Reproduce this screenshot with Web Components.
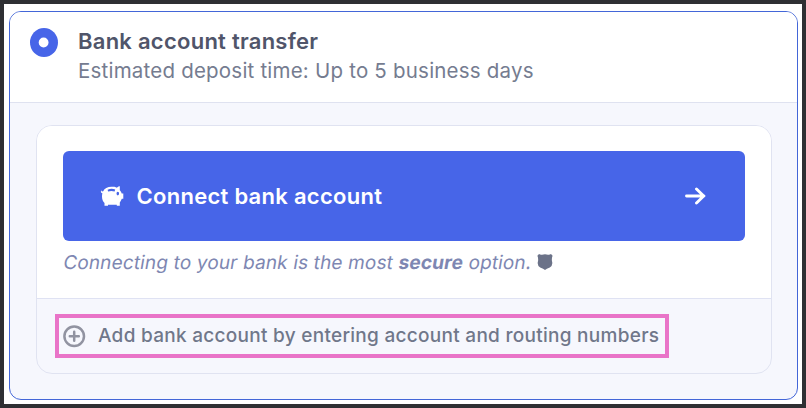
<!DOCTYPE html>
<html lang="en">
<head>
<meta charset="utf-8">
<title>Bank account transfer</title>
<style>
body { margin: 0; font-family: Inter, "Liberation Sans", sans-serif; }
</style>
</head>
<body>
<page-frame>
  <payment-option>
    <option-radio slot="radio"></option-radio>
    <span slot="title">Bank account transfer</span>
    <span slot="detail">Estimated deposit time: Up to 5 business days</span>
    <account-panel>
      <connect-button>Connect bank account</connect-button>
      <secure-note>Connecting to your bank is the most <b>secure</b> option.</secure-note>
      <add-account slot="footer">Add bank account by entering account and routing numbers</add-account>
    </account-panel>
  </payment-option>
</page-frame>
<script>
function define(name, html) {
  const template = document.createElement('template');
  template.innerHTML = html;
  customElements.define(name, class extends HTMLElement {
    constructor() {
      super();
      this.attachShadow({ mode: 'open' }).append(template.content.cloneNode(true));
    }
  });
}

define('page-frame', `
<style>
:host { display: block; box-sizing: border-box; width: 806px; height: 408px; border: 4px solid #2e2f33; background: #fff; padding: 7px 4px 4px 5px; }
</style><slot></slot>`);

define('payment-option', `
<style>
:host { display: flex; flex-direction: column; box-sizing: border-box; height: 389px; border: 1px solid #4366d8; border-radius: 12px; background: #f6f7fd; overflow: hidden; }
header { display: flex; box-sizing: border-box; height: 91px; padding: 16px 20px 0; gap: 20px; background: #fff; border-bottom: 1px solid #dfe2f0; }
.title { font-size: 22px; font-weight: 600; line-height: 26px; letter-spacing: .26px; color: #50556a; white-space: nowrap; }
.detail { padding-top: 2px; font-size: 20.5px; line-height: 30px; letter-spacing: .21px; color: #757c90; white-space: nowrap; }
.body { flex: 1; padding: 22px 25px 25px 26px; display: flex; }
::slotted(account-panel) { flex: 1; }
</style>
<header><slot name="radio"></slot><div class="text"><div class="title"><slot name="title"></slot></div><div class="detail"><slot name="detail"></slot></div></div></header>
<div class="body"><slot></slot></div>`);

define('option-radio', `
<style>
:host { display: block; width: 28px; height: 29px; }
svg { display: block; }
</style>
<svg width="28" height="29" viewBox="0 0 28 29"><ellipse cx="14" cy="14.5" rx="14" ry="14.5" fill="#4765e8"/><circle cx="13.6" cy="14.5" r="4.9" fill="#fff"/></svg>`);

define('account-panel', `
<style>
:host { display: flex; flex-direction: column; box-sizing: border-box; height: 249px; border: 1px solid #e0e3f1; border-radius: 16px; overflow: hidden; }
.main { box-sizing: border-box; height: 173px; padding: 25px 26px 0; background: #fff; border-bottom: 1px solid #dfe2f3; }
.foot { padding: 15px 18px; }
</style>
<div class="main"><slot></slot></div><div class="foot"><slot name="footer"></slot></div>`);

define('connect-button', `
<style>
:host { display: flex; align-items: center; box-sizing: border-box; height: 90px; padding: 0 39px 0 37px; border-radius: 6px; background: #4765e8; color: #fff; font-size: 22px; font-weight: 600; letter-spacing: .28px; white-space: nowrap; }
.label { flex: 1; padding-left: 12.5px; }
svg { display: block; }
</style>
<svg width="24" height="22" viewBox="0 0 24 22"><path fill="#fff" fill-rule="evenodd" d="M1.2 5.2C1.5 6.2 2.2 6.6 3.2 6.3C4.5 3.2 7.5 1.7 11.5 1.7H14.5L17 2.7C17.8 1.7 18.5 1.2 19.8 1.2V5.2C20.8 6.1 21.3 7.1 21.7 8.4H23.3V13.8H21.8C21.3 15.4 20.5 16.6 19.8 17.4V20.8H16.8V19.8H8V20.8H4.5V18C2.9 16.4 2 14.2 2 11.5C2 10.2 2.1 9.2 2.4 8.3C1 8.1 .5 6.6 1.2 5.2ZM7.6 4.7C10.3 3.6 12.8 3.6 15.2 4.5L14.6 6.5C12.2 5.7 10.6 5.7 8.1 6.5ZM17.8 6.8Q16.5 6.8 16.5 8.6Q16.5 10.4 17.8 10.4Q19.1 10.4 19.1 8.6Q19.1 6.8 17.8 6.8Z"/></svg>
<span class="label"><slot></slot></span>
<svg width="21" height="18" viewBox="0 0 21 18"><path d="M1.5 9H19M11.5 2L18.7 9L11.5 16" fill="none" stroke="#fff" stroke-width="2.9" stroke-linecap="round" stroke-linejoin="round"/></svg>`);

define('secure-note', `
<style>
:host { display: flex; align-items: center; justify-content: space-between; width: 490px; height: 42px; font-size: 19px; letter-spacing: .15px; color: #7e87b2; white-space: nowrap; }
span { display: block; padding-left: .5px; transform: skewX(-9.4deg); }
::slotted(b) { font-weight: 700; }
svg { display: block; }
</style>
<span><slot></slot></span>
<svg width="16" height="16" viewBox="0 0 16 16"><path fill="#6b7288" d="M2 0Q3.4 1.1 5 .7Q8 -.3 11 .7Q12.6 1.1 14 0L15.6 1.8Q14.5 4.2 15 7.2Q16.2 11.6 12.8 13.4Q9.4 14.4 8 16Q6.6 14.4 3.2 13.4Q-.2 11.6 1 7.2Q1.5 4.2.4 1.8Z"/></svg>`);

define('add-account', `
<style>
:host { display: flex; align-items: center; box-sizing: border-box; width: 614px; height: 44px; border: 4px solid #e974c8; padding-left: 4px; font-size: 19px; font-weight: 500; letter-spacing: .28px; color: #70778a; white-space: nowrap; }
svg { display: block; margin-right: 12px; }
span { padding-bottom: 2px; }
</style>
<svg width="23" height="23" viewBox="0 0 23 23"><g fill="none" stroke="#9193a1" stroke-width="2.5" stroke-linecap="round"><circle cx="11.2" cy="11.2" r="9.8"/><path d="M6.8 11.2H15.8M11.2 6.7V15.7"/></g></svg>
<span><slot></slot></span>`);
</script>
</body>
</html>
